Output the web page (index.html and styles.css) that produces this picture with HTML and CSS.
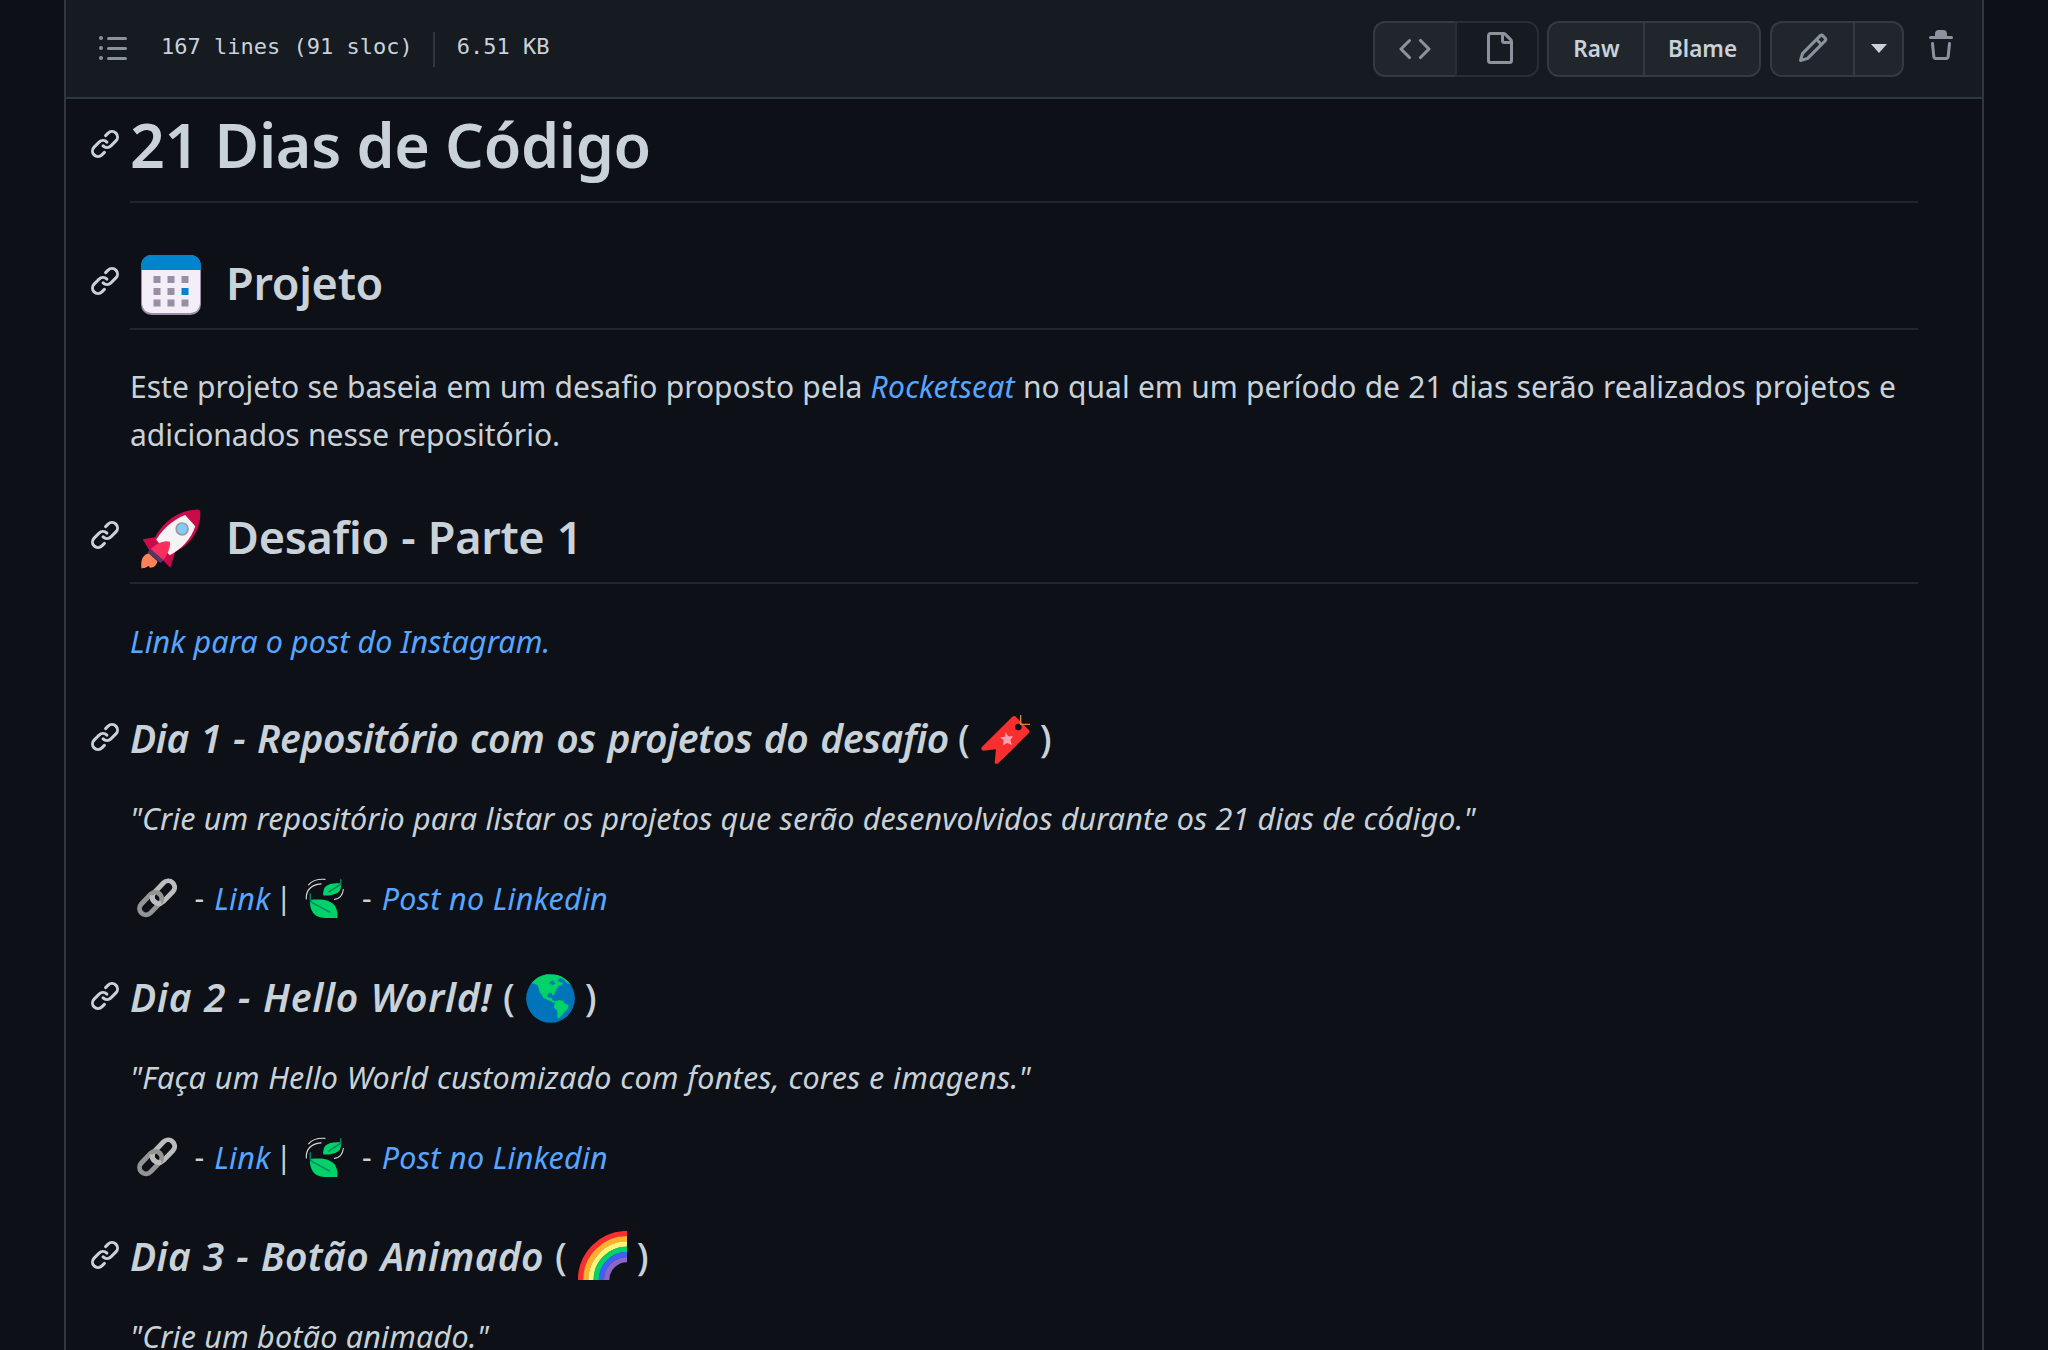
FILE: index.html
```
<!DOCTYPE html>
<html lang="pt-BR">
<head>
<meta charset="utf-8">
<title>21 Dias de Código</title>
<link rel="stylesheet" href="styles.css">
</head>
<body>
<svg class="defs" aria-hidden="true">
  <symbol id="anchor" viewBox="0 0 16 16"><path d="M7.775 3.275a.75.75 0 001.06 1.06l1.25-1.25a2 2 0 112.83 2.83l-2.5 2.5a2 2 0 01-2.83 0 .75.75 0 00-1.06 1.06 3.5 3.5 0 004.95 0l2.5-2.5a3.5 3.5 0 00-4.95-4.95l-1.25 1.25zm-4.69 9.64a2 2 0 010-2.83l2.5-2.5a2 2 0 012.83 0 .75.75 0 001.06-1.06 3.5 3.5 0 00-4.95 0l-2.5 2.5a3.5 3.5 0 004.95 4.95l1.25-1.25a.75.75 0 00-1.06-1.06l-1.25 1.25a2 2 0 01-2.83 0z"/></symbol>
  <symbol id="chain" viewBox="22 25 120 122">
    <g fill="none" stroke-width="15">
      <rect x="62" y="48.500" width="80" height="39" rx="19.500" transform="rotate(-46 102 68)" stroke="#bdbdbd"/>
      <rect x="22.500" y="83.500" width="80" height="39" rx="19.500" transform="rotate(-46 62.500 103)" stroke="#949494"/>
      <path d="M67 78 Q66 90 73 97 Q82 106 95 102" stroke="#bdbdbd"/>
    </g>
  </symbol>
  <symbol id="leaf" viewBox="525 25 120 122">
    <path fill="#00d26a" d="M540 92C575 88 600 92 614 108Q624 121 623 147C590 149 560 148 548 130C540 117 538 105 540 92ZM634 42C615 40 596 42 586 52Q577 62 580 78C600 80 620 76 630 64Q635 55 634 42Z"/>
    <path fill="none" stroke="#008463" stroke-width="4.500" stroke-linecap="round" d="M540 74V92Q541 97 546 100L599 129M633 30V44L597 67"/>
    <path fill="none" stroke="#d6d6d6" stroke-width="3.500" stroke-linecap="round" d="M535 46Q550 27 585 29M528 89Q526 48 573 43M614 90Q637 88 641 60"/>
  </symbol>
</svg>
<main class="blob">
  <header class="bar">
    <svg class="ic list" viewBox="0 0 16 16"><path d="M2 4a1 1 0 100-2 1 1 0 000 2zm3.750-1.500a.75.75 0 000 1.500h8.500a.75.75 0 000-1.500h-8.500zm0 5a.75.75 0 000 1.500h8.500a.75.75 0 000-1.500h-8.500zm0 5a.75.75 0 000 1.500h8.500a.75.75 0 000-1.500h-8.500zM3 8a1 1 0 11-2 0 1 1 0 012 0zm-1 6a1 1 0 100-2 1 1 0 000 2z"/></svg>
    <div class="info"><span>167 lines (91 sloc)</span><i class="sep"></i><span>6.51 KB</span></div>
    <div class="actions">
      <div class="group view">
        <button class="btn"><svg class="ic" viewBox="0 0 16 16"><path d="M4.720 3.220a.75.75 0 011.060 1.060L2.060 8l3.720 3.720a.75.75 0 11-1.060 1.060L.47 8.530a.75.75 0 010-1.060l4.250-4.250zm6.560 0a.75.75 0 10-1.060 1.060L13.940 8l-3.720 3.720a.75.75 0 101.060 1.060l4.250-4.250a.75.75 0 000-1.060l-4.250-4.250z"/></svg></button>
        <button class="btn on"><svg class="ic" viewBox="0 0 16 16"><path d="M2 1.750C2 .784 2.784 0 3.750 0h6.586c.464 0 .909.184 1.237.513l2.914 2.914c.329.328.513.773.513 1.237v9.586A1.750 1.750 0 0113.250 16h-9.500A1.750 1.750 0 012 14.250V1.750zm1.750-.25a.25.25 0 00-.25.25v12.500c0 .138.112.25.25.25h9.500a.25.25 0 00.25-.25V6h-2.750A1.750 1.750 0 019 4.250V1.500H3.750zm6.750.062V4.250c0 .138.112.25.25.25h2.688a.252.252 0 00-.011-.013l-2.914-2.914a.272.272 0 00-.013-.011z"/></svg></button>
      </div>
      <div class="group text">
        <button class="btn raw">Raw</button>
        <button class="btn blame">Blame</button>
      </div>
      <div class="group edit">
        <button class="btn"><svg class="ic" viewBox="0 0 16 16"><path d="M11.013 1.427a1.750 1.750 0 012.474 0l1.086 1.086a1.750 1.750 0 010 2.474l-8.610 8.610c-.21.21-.47.364-.756.445l-3.251.93a.75.75 0 01-.927-.928l.929-3.250a1.750 1.750 0 01.445-.758l8.610-8.610zm1.414 1.060a.25.25 0 00-.354 0L10.811 3.750l1.439 1.440 1.263-1.263a.25.25 0 000-.354l-1.086-1.086zM11.189 6.250L9.750 4.810l-6.286 6.287a.25.25 0 00-.064.108l-.558 1.953 1.953-.558a.249.249 0 00.108-.064l6.286-6.286z"/></svg></button>
        <button class="btn more"><i class="caret"></i></button>
      </div>
      <svg class="ic trash" viewBox="0 0 16 16"><path d="M6.500 1.750a.25.25 0 01.25-.25h2.500a.25.25 0 01.25.25V3h-3V1.750zm4.500 0V3h2.250a.75.75 0 010 1.500H2.750a.75.75 0 010-1.500H5V1.750C5 .784 5.784 0 6.750 0h2.500C10.216 0 11 .784 11 1.750zM4.496 6.675a.75.75 0 10-1.492.15l.66 6.600A1.750 1.750 0 005.405 15h5.190c.9 0 1.652-.681 1.741-1.576l.66-6.600a.75.75 0 00-1.492-.149l-.66 6.600a.25.25 0 01-.249.225h-5.190a.25.25 0 01-.249-.225l-.66-6.600z"/></svg>
    </div>
  </header>
  <article class="readme">
    <h1><svg class="anchor"><use href="#anchor"/></svg><span>21 Dias de Código</span></h1>

    <h2><svg class="anchor"><use href="#anchor"/></svg>
      <svg class="emoji" viewBox="0 0 60 60">
        <rect width="60" height="60" rx="10.500" fill="#998ea4"/>
        <path fill="#f3eef8" d="M1 14H59V48.500A9.500 9.500 0 0149.500 58H10.500A9.500 9.500 0 011 48.500Z"/>
        <path fill="#0084ce" d="M0 15V10.500A10.500 10.500 0 0110.500 0H49.500A10.500 10.500 0 0160 10.500V15Z"/>
        <path fill="#998ea4" d="M12.500 21h7v7h-7zM26.500 21h7v7h-7zM40.500 21h7v7h-7zM12.500 33h7v7h-7zM26.500 33h7v7h-7zM12.500 44.500h7v7h-7zM26.500 44.500h7v7h-7zM40.500 44.500h7v7h-7z"/>
        <path fill="#0084ce" d="M40.500 33h7v7h-7z"/>
      </svg><span>Projeto</span></h2>
    <p>Este projeto se baseia em um desafio proposto pela <a class="rocketseat">Rocketseat</a> no qual em um período de 21 dias serão realizados projetos e adicionados nesse repositório.</p>

    <h2><svg class="anchor"><use href="#anchor"/></svg>
      <svg class="emoji" viewBox="17 15 178 178">
        <path fill="#ca0b4a" d="M192 20C197 52 181 98 148 124L118 144L104 189L80 165L40 135L22 105L58 99C85 52 125 20 178 17Q190 16 192 20Z"/>
        <path fill="#f4f4f4" d="M62 106C82 74 110 48 148 33L178 66C165 105 138 133 102 152Z"/>
        <path fill="#f92f60" d="M42 138C60 118 84 106 103 112C105 130 95 152 80 170Z"/>
        <path fill="#533566" d="M36 144L46 134L84 167L75 175Z"/>
        <path fill="#ff8257" d="M18 191C16 166 22 150 40 147L66 170C63 182 55 190 43 189Q42 184 39 184Q30 192 18 191Z"/>
        <circle cx="139" cy="74" r="17.500" fill="#83cbff" stroke="#9b9b9b" stroke-width="5"/>
      </svg><span>Desafio - Parte 1</span></h2>
    <p class="it insta"><a>Link para o post do Instagram.</a></p>

    <h3><svg class="anchor"><use href="#anchor"/></svg><em class="d1">Dia 1 - Repositório com os projetos do desafio</em><span class="open">(</span>
      <svg class="emoji" viewBox="360 105 147 147">
        <path fill="#f92f2f" d="M463 109L504 151Q507 155 504 159L412 250Q404 254 401 248L405 208L367 212Q358 208 362 202L454 110Q459 106 463 109Z"/>
        <circle cx="472" cy="141" r="10" fill="#0d1117"/>
        <path fill="none" stroke="#d3883e" stroke-width="4" d="M479 105V133H507"/>
        <path fill="#f9a1b5" d="M434 156L441 169L456 169L448 180L453 195L439 189L426 196L428 181L417 172L432 170Z"/>
      </svg><span class="close">)</span></h3>
    <p class="it q1">"Crie um repositório para listar os projetos que serão desenvolvidos durante os 21 dias de código."</p>
    <div class="links"><svg class="mini"><use href="#chain"/></svg><span class="dash">-</span><a class="lk">Link</a><span class="pipe">|</span><svg class="mini leaf"><use href="#leaf"/></svg><span class="dash">-</span><a class="post">Post no Linkedin</a></div>

    <h3><svg class="anchor"><use href="#anchor"/></svg><em class="d2">Dia 2 - Hello World!</em><span class="open">(</span>
      <svg class="emoji" viewBox="27 24 149 149">
        <circle cx="101.500" cy="98.500" r="74" fill="#0074ba"/>
        <path fill="#00d26a" d="M43 53Q62 30 90 25L118 26L128 30L130 38L122 44L132 50L140 50L136 58L126 60L118 74L112 88L108 90L106 82L98 81L92 86V93L98 97L104 95L107 103L116 108L126 103L140 105L144 113L157 119L154 130L140 144L126 160L123 158L122 136L112 126L114 112L100 106L80 97L76 88L68 80L66 66L62 58L54 54Z"/>
        <path fill="#00d26a" d="M118 26Q146 32 163 56L152 52L140 40L130 36Z"/>
        <path fill="#0074ba" d="M104 46L110 44L112 50L118 52L112 56L106 58L104 54L96 52Z"/>
      </svg><span class="close">)</span></h3>
    <p class="it q2">"Faça um Hello World customizado com fontes, cores e imagens."</p>
    <div class="links"><svg class="mini"><use href="#chain"/></svg><span class="dash">-</span><a class="lk">Link</a><span class="pipe">|</span><svg class="mini leaf"><use href="#leaf"/></svg><span class="dash">-</span><a class="post">Post no Linkedin</a></div>

    <h3><svg class="anchor"><use href="#anchor"/></svg><em class="d3">Dia 3 - Botão Animado</em><span class="open">(</span>
      <svg class="emoji rainbow" viewBox="0 0 49 49">
        <g fill="none" stroke-width="5.400">
          <path stroke="#f92f2f" d="M2.600 49A46.400 46.400 0 0149 2.600"/>
          <path stroke="#ffb02e" d="M7.800 49A41.200 41.200 0 0149 7.800"/>
          <path stroke="#fff478" d="M13 49A36 36 0 0149 13"/>
          <path stroke="#00d26a" d="M18.200 49A30.800 30.800 0 0149 18.200"/>
          <path stroke="#3f5fff" d="M23.400 49A25.600 25.600 0 0149 23.400"/>
          <path stroke="#8d65c5" d="M28.600 49A20.400 20.400 0 0149 28.600"/>
        </g>
      </svg><span class="close">)</span></h3>
    <p class="it q3">"Crie um botão animado."</p>
  </article>
</main>
</body>
</html>
```
FILE: styles.css
```
* { box-sizing: border-box; }
html, body { height: 100%; }
body {
  margin: 0;
  overflow: hidden;
  background: #0d1117;
  color: #c9d1d9;
  font: 30px/48px "Noto Sans", "Open Sans", sans-serif;
}
.defs { display: none; }
.blob {
  width: 1920px;
  margin: 0 auto;
  height: 1350px;
  overflow: hidden;
  border: solid #30363d;
  border-width: 0 2px;
}

/* toolbar */
.bar {
  display: flex;
  align-items: center;
  height: 99px;
  padding: 0 25px 0 31px;
  background: #161b22;
  border-bottom: 2px solid #30363d;
}
.ic { width: 32px; height: 32px; flex: none; fill: #8b949e; }
.list { margin-top: -2px; }
.info {
  display: flex;
  align-items: center;
  margin-left: 32px;
  font: 22px/35px "DejaVu Sans Mono", monospace;
}
.info span { margin-top: -5px; }
.sep { width: 2px; height: 35px; margin: 2px 22px 0 20px; background: #30363d; }
.actions { display: flex; align-items: center; margin-left: auto; }
.group { display: flex; height: 56px; margin-right: 9px; }
.btn {
  display: flex;
  align-items: center;
  justify-content: center;
  flex: 1;
  margin: 0;
  padding: 0;
  background: #21262d;
  border: 2px solid #343a41;
  color: #c9d1d9;
  font: 600 22.5px/50px "Noto Sans", sans-serif;
}
.btn:first-child { border-radius: 12px 0 0 12px; border-right-width: 0; }
.btn:last-child { border-radius: 0 12px 12px 0; }
.btn.on { background: #161b22; border-color: #282e35; }
.btn.on .ic { margin: -2px 0 0 3px; }
.view { width: 166px; margin-right: 8px; }
.text { width: 214px; }
.raw { flex: 0 0 96px; padding-left: 1px; }
.blame { padding-left: 1px; }
.edit { width: 134px; }
.edit .ic { margin-top: -2px; }
.more { flex: 0 0 51px; }
.caret { border: solid transparent; border-width: 9px 8.5px 0; border-top-color: #c9d1d9; }
.trash { margin: -6px 0 0 12px; }

/* rendered markdown */
.readme { padding: 3px 64px 0; }
h1, h2, h3 { display: flex; align-items: center; margin: 0; font-weight: 600; white-space: nowrap; }
.anchor { width: 32px; height: 32px; flex: none; margin: 0 9px 0 -41px; fill: #c9d1d9; }
h1 {
  height: 101px;
  padding-bottom: 15px;
  margin-bottom: 49px;
  border-bottom: 2px solid #21262d;
  font-size: 61px;
  letter-spacing: -.35px;
}
h1 span { margin-top: 2px; }
h2 {
  height: 78px;
  padding-bottom: 14px;
  border-bottom: 2px solid #21262d;
  font-size: 45px;
  letter-spacing: -.3px;
  word-spacing: 1px;
}
h2 .anchor { margin-top: -4px; }
h2 .emoji { width: 60px; height: 60px; margin: 3px 25px 0 11px; }
h3 { height: 50px; font-size: 39px; }
h3 em { margin-top: 1px; }
h3 .emoji { width: 49px; height: 49px; margin: 4px 10px 0 11px; }
h3 .rainbow { margin-top: 1px; }
h3 span { font-size: 38px; font-weight: 500; }
.open { margin-left: 11px; }
.d1 { letter-spacing: -.42px; word-spacing: 2px; }
.d2 { letter-spacing: .7px; word-spacing: 1px; }
.d3 { letter-spacing: .35px; word-spacing: 1.2px; }
.d1 + .open { margin-left: 9px; }
p { margin: 33px 0 47px; word-spacing: .5px; }
a { color: #58a6ff; font-style: italic; }
.rocketseat { letter-spacing: .24px; }
.it { font-size: 30.5px; font-style: italic; white-space: nowrap; word-spacing: 0; }
h3 + p { margin: 32px 0; }
.insta { letter-spacing: .08px; }
.q1 { letter-spacing: .1px; word-spacing: .2px; }
.q2 { letter-spacing: .24px; word-spacing: .4px; }
.q3 { letter-spacing: .2px; }

.links { display: flex; align-items: center; height: 49px; margin: -1px 0 49px; }
.links a { font-size: 30.5px; margin-left: 10px; letter-spacing: .3px; }
.mini { width: 40px; height: 40px; margin-left: 7px; }
.leaf { margin-left: 12.5px; }
.dash { margin-left: 17.5px; }
.pipe { margin-left: 5px; }
```
